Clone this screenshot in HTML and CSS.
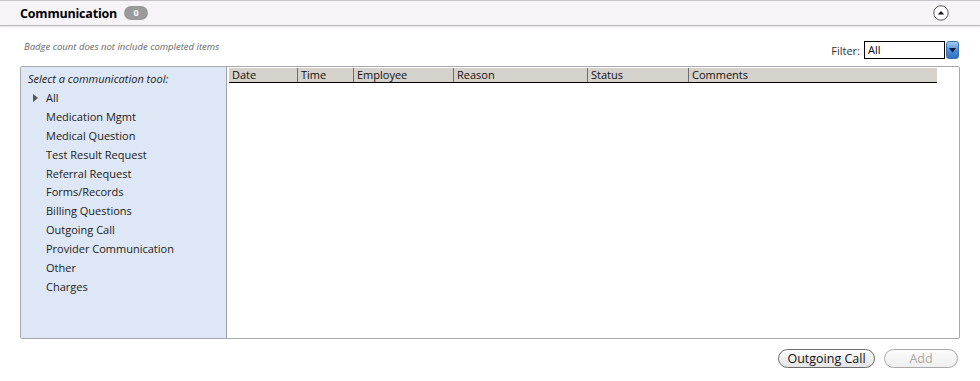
FILE: index.html
```html
<!DOCTYPE html>
<html lang="en">
<head>
  <meta charset="UTF-8">
  <title>Communication</title>
  <link rel="stylesheet" href="styles.css">
</head>
<body>
  <div class="section-header">
    <div class="section-title">
      <h2>Communication</h2>
      <span class="badge">0</span>
    </div>
    <button class="collapse-btn" aria-label="Collapse">
      <svg width="16" height="16" viewBox="0 0 16 16">
        <circle cx="8" cy="8" r="7.2" fill="#fff" stroke="#5a5a5a" stroke-width="1"/>
        <path d="M4.8 9.6 L8 6 L11.2 9.6 Z" fill="#111"/>
      </svg>
    </button>
  </div>

  <div class="content">
    <div class="toolbar">
      <p class="note">Badge count does not include completed items</p>
      <div class="filter">
        <label for="filter">Filter:</label>
        <div class="select-box">
          <span class="select-value">All</span>
        </div>
        <span class="select-arrow">
          <svg width="7" height="5" viewBox="0 0 7 5"><path d="M0 0 H7 L3.5 4.5 Z" fill="#0a1a40"/></svg>
        </span>
      </div>
    </div>

    <div class="panel">
      <div class="tool-list">
        <p class="tool-caption">Select a communication tool:</p>
        <ul>
          <li class="selected">All</li>
          <li>Medication Mgmt</li>
          <li>Medical Question</li>
          <li>Test Result Request</li>
          <li>Referral Request</li>
          <li>Forms/Records</li>
          <li>Billing Questions</li>
          <li>Outgoing Call</li>
          <li>Provider Communication</li>
          <li>Other</li>
          <li>Charges</li>
        </ul>
      </div>
      <div class="grid-area">
        <div class="grid-head">
          <div class="col col-date">Date</div>
          <div class="col col-time">Time</div>
          <div class="col col-employee">Employee</div>
          <div class="col col-reason">Reason</div>
          <div class="col col-status">Status</div>
          <div class="col col-comments">Comments</div>
        </div>
      </div>
    </div>

    <div class="actions">
      <button class="pill">Outgoing Call</button>
      <button class="pill" disabled>Add</button>
    </div>
  </div>
</body>
</html>
```

FILE: styles.css
```css
* {
  box-sizing: border-box;
  margin: 0;
  padding: 0;
}

body {
  background: #fff;
  font-family: 'Open Sans', 'Noto Sans', sans-serif;
  font-size: 11px;
  color: #222;
  width: 980px;
  height: 381px;
  overflow: hidden;
}

.section-header {
  height: 26px;
  background: #f7f4f7;
  border-top: 1px solid #c9c6cb;
  border-bottom: 1px solid #bdbabe;
  box-shadow: 0 1px 2px rgba(0, 0, 0, 0.12);
  display: flex;
  align-items: center;
  justify-content: space-between;
  padding: 0 31px 0 20px;
}

.section-title {
  display: flex;
  align-items: center;
  gap: 7px;
}

h2 {
  font-size: 12.5px;
  font-weight: 700;
  color: #000;
  letter-spacing: -0.2px;
}

.badge {
  display: inline-block;
  width: 24px;
  height: 14px;
  border-radius: 7px;
  background: #9a9a9a;
  color: #fff;
  font-size: 9px;
  font-weight: 700;
  line-height: 14px;
  text-align: center;
}

.collapse-btn {
  border: none;
  background: none;
  width: 16px;
  height: 16px;
  display: flex;
}

.content {
  padding: 0 20px;
}

.toolbar {
  display: flex;
  justify-content: space-between;
  align-items: flex-end;
  height: 33px;
  padding-left: 4px;
}

.note {
  align-self: flex-start;
  margin-top: 14px;
  font-size: 9.5px;
  font-style: italic;
  color: #666;
}

.filter {
  display: flex;
  align-items: center;
  margin-right: 1px;
}

.filter label {
  color: #333;
  font-size: 11px;
  margin-right: 4px;
}

.select-box {
  width: 81px;
  height: 18px;
  border: 1px solid #000;
  background: #fff;
  padding: 0 3px;
  line-height: 16px;
  color: #000;
}

.select-arrow {
  width: 13px;
  height: 18px;
  margin-left: 1px;
  border-radius: 3px;
  border: 1px solid #3b6ea8;
  background: linear-gradient(#a6cdf3, #4a8ad6 55%, #3372c0);
  display: flex;
  align-items: center;
  justify-content: center;
}

.panel {
  margin-top: 7px;
  height: 273px;
  border: 1px solid #a9a9a9;
  border-radius: 2px;
  display: flex;
}

.tool-list {
  width: 206px;
  background: #dde7f5;
  border-right: 1px solid #9fa3a8;
  padding: 5px 0 0 7px;
}

.tool-caption {
  font-style: italic;
  color: #222;
  line-height: 14px;
  margin-bottom: 4px;
}

.tool-list ul {
  list-style: none;
}

.tool-list li {
  height: 18.9px;
  line-height: 16px;
  padding-left: 18px;
  color: #222;
  position: relative;
}

.tool-list li.selected::before {
  content: '';
  position: absolute;
  left: 5px;
  top: 4px;
  border-left: 5px solid #555;
  border-top: 4px solid transparent;
  border-bottom: 4px solid transparent;
}

.grid-area {
  flex: 1;
  padding: 1px 22px 0 2px;
}

.grid-head {
  display: flex;
  height: 15px;
  background: #d5d2cc;
  border-bottom: 1px solid #000;
}

.col {
  line-height: 14px;
  padding-left: 3px;
  color: #111;
  border-left: 1px solid #6e6e6e;
}

.col-date { width: 68px; border-left: none; }
.col-time { width: 56px; }
.col-employee { width: 100px; }
.col-reason { width: 134px; }
.col-status { width: 101px; }
.col-comments { flex: 1; }

.actions {
  display: flex;
  justify-content: flex-end;
  gap: 9px;
  margin-top: 10px;
  padding-right: 2px;
}

.pill {
  height: 19px;
  border-radius: 10px;
  border: 1px solid #6c6c6c;
  background: linear-gradient(#fdfdfd, #e4e4e4);
  font-family: 'Open Sans', 'Noto Sans', sans-serif;
  font-size: 12.5px;
  color: #111;
  padding: 0 5px;
  line-height: 16px;
}

.pill:first-child {
  width: 97px;
}

.pill:disabled {
  width: 74px;
  color: #a8a8a8;
  border-color: #a8a8a8;
  background: linear-gradient(#fbfbfb, #efefef);
}
```
